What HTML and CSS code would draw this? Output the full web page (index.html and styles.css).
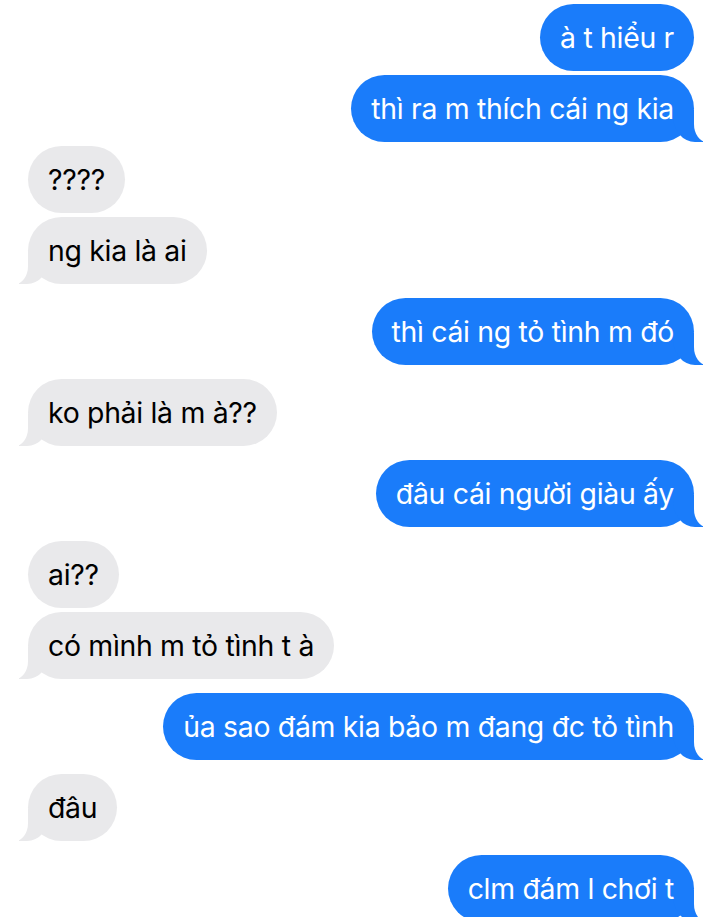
FILE: index.html
```html
<!DOCTYPE html>
<html lang="vi">
<head>
<meta charset="utf-8">
<title>Tin nhắn</title>
<link rel="stylesheet" href="styles.css">
</head>
<body>
<div class="chat">
  <div class="msg sent first"><span>à t hiểu r</span></div>
  <div class="msg sent tail near"><span>thì ra m thích cái ng kia</span></div>
  <div class="msg recv near"><span>????</span></div>
  <div class="msg recv tail near"><span>ng kia là ai</span></div>
  <div class="msg sent tail far"><span>thì cái ng tỏ tình m đó</span></div>
  <div class="msg recv tail far"><span>ko phải là m à??</span></div>
  <div class="msg sent tail far"><span>đâu cái người giàu ấy</span></div>
  <div class="msg recv far"><span>ai??</span></div>
  <div class="msg recv tail near"><span>có mình m tỏ tình t à</span></div>
  <div class="msg sent tail far"><span>ủa sao đám kia bảo m đang đc tỏ tình</span></div>
  <div class="msg recv tail far"><span>đâu</span></div>
  <div class="msg sent tail far"><span>clm đám l chơi t</span></div>
</div>
</body>
</html>
```
FILE: styles.css
```css
html, body {
  margin: 0;
  padding: 0;
  background: #ffffff;
}
body {
  width: 720px;
  height: 917px;
  overflow: hidden;
}
.chat {
  display: flex;
  flex-direction: column;
  padding: 0 26px 0 28px;
  font-family: Inter, "Noto Sans", sans-serif;
  font-size: 28.4px;
  letter-spacing: -0.3px;
}
.msg {
  position: relative;
  height: 67px;
  line-height: 67px;
  padding: 0 20px;
  border-radius: 34px;
  white-space: nowrap;
  box-sizing: border-box;
}
.msg > span {
  position: relative;
  z-index: 2;
}
.first { margin-top: 4px; }
.near { margin-top: 4px; }
.far { margin-top: 14px; }
.sent {
  align-self: flex-end;
  background: #1a7cfa;
  color: #ffffff;
}
.recv {
  align-self: flex-start;
  background: #e9e9eb;
  color: #000000;
}
.sent.tail::before {
  content: "";
  position: absolute;
  bottom: 0;
  right: -9px;
  width: 30px;
  height: 32px;
  background: #1a7cfa;
  border-bottom-left-radius: 22px 26px;
  z-index: 0;
}
.sent.tail::after {
  content: "";
  position: absolute;
  bottom: 0;
  right: -18px;
  width: 18px;
  height: 32px;
  background: #ffffff;
  border-bottom-left-radius: 13px 18px;
  z-index: 1;
}
.recv.tail::before {
  content: "";
  position: absolute;
  bottom: 0;
  left: -9px;
  width: 30px;
  height: 32px;
  background: #e9e9eb;
  border-bottom-right-radius: 22px 26px;
  z-index: 0;
}
.recv.tail::after {
  content: "";
  position: absolute;
  bottom: 0;
  left: -18px;
  width: 18px;
  height: 32px;
  background: #ffffff;
  border-bottom-right-radius: 13px 18px;
  z-index: 1;
}
```
